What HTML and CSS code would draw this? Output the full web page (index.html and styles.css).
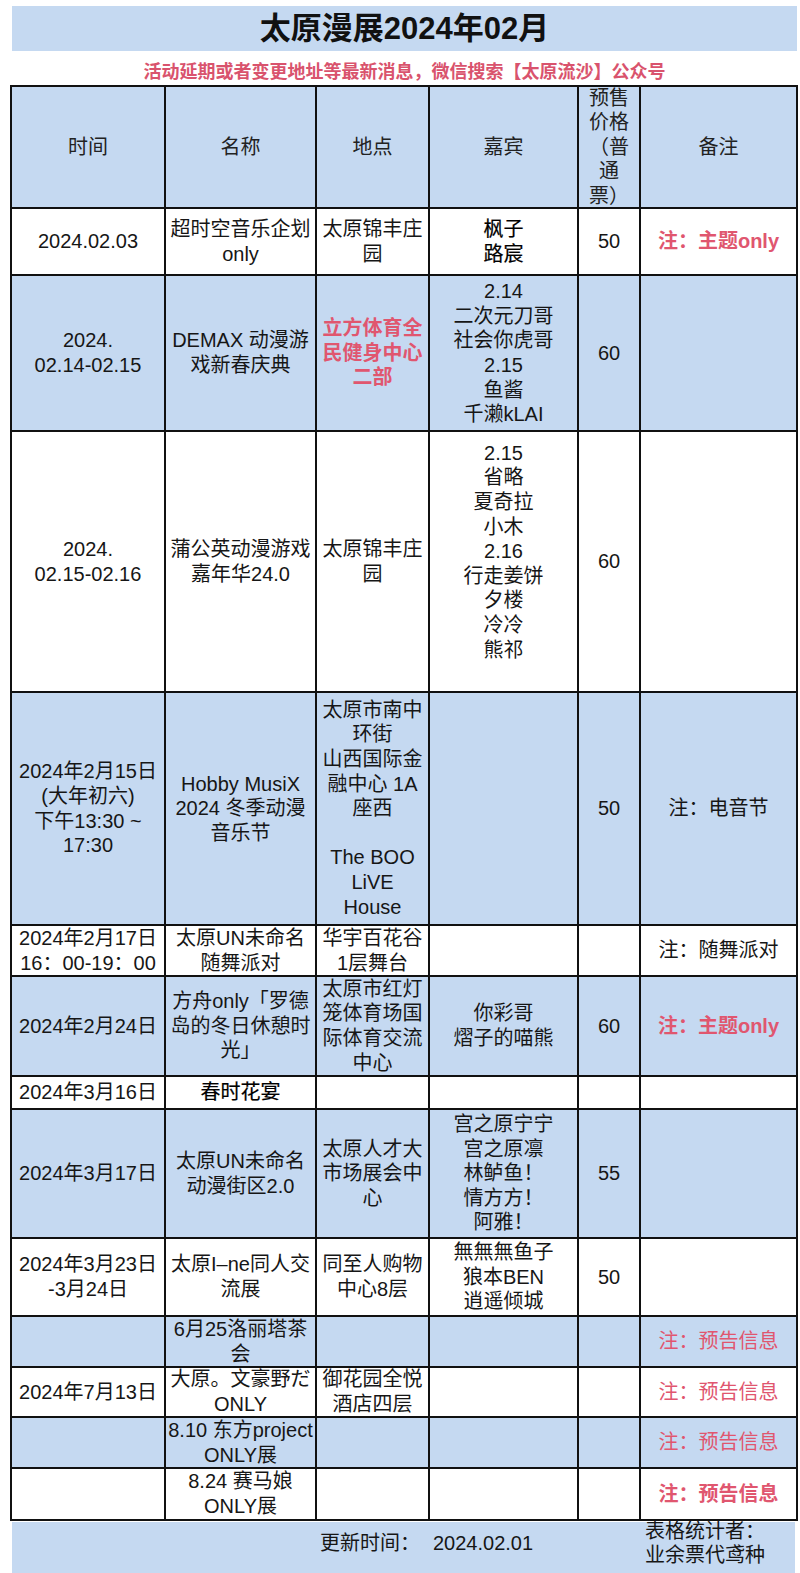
FILE: index.html
```html
<!DOCTYPE html>
<html lang="zh">
<head>
<meta charset="utf-8">
<title>太原漫展2024年02月</title>
<link rel="stylesheet" href="styles.css">
</head>
<body>
<div class="page">
  <div class="title-bar"><h1 class="title">太原漫展2024年02月</h1></div>
  <p class="notice">活动延期或者变更地址等最新消息，微信搜索【太原流沙】公众号</p>

  <div class="sheet">
    <div class="row blue head">
      <div class="c">时间</div>
      <div class="c">名称</div>
      <div class="c">地点</div>
      <div class="c">嘉宾</div>
      <div class="c">预售<br>价格<br>（普<br>通<br>票）</div>
      <div class="c">备注</div>
    </div>

    <div class="row">
      <div class="c">2024.02.03</div>
      <div class="c">超时空音乐企划<br>only</div>
      <div class="c">太原锦丰庄<br>园</div>
      <div class="c med">枫子<br>路宸</div>
      <div class="c">50</div>
      <div class="c red bold">注：主题only</div>
    </div>

    <div class="row blue">
      <div class="c">2024.<br>02.14-02.15</div>
      <div class="c">DEMAX 动漫游<br>戏新春庆典</div>
      <div class="c red bold">立方体育全<br>民健身中心<br>二部</div>
      <div class="c">2.14<br>二次元刀哥<br>社会你虎哥<br>2.15<br>鱼酱<br>千濑kLAI</div>
      <div class="c">60</div>
      <div class="c"></div>
    </div>

    <div class="row">
      <div class="c">2024.<br>02.15-02.16</div>
      <div class="c">蒲公英动漫游戏<br>嘉年华24.0</div>
      <div class="c">太原锦丰庄<br>园</div>
      <div class="c lift">2.15<br>省略<br>夏奇拉<br>小木<br>2.16<br>行走姜饼<br>夕楼<br>冷冷<br>熊祁</div>
      <div class="c">60</div>
      <div class="c"></div>
    </div>

    <div class="row blue">
      <div class="c">2024年2月15日<br>(大年初六)<br>下午13:30 ~<br>17:30</div>
      <div class="c">Hobby MusiX<br>2024 冬季动漫<br>音乐节</div>
      <div class="c">太原市南中<br>环街<br>山西国际金<br>融中心 1A<br>座西<br><br>The BOO<br>LiVE<br>House</div>
      <div class="c"></div>
      <div class="c">50</div>
      <div class="c">注：电音节</div>
    </div>

    <div class="row">
      <div class="c">2024年2月17日<br>16：00-19：00</div>
      <div class="c">太原UN未命名<br>随舞派对</div>
      <div class="c">华宇百花谷<br>1层舞台</div>
      <div class="c"></div>
      <div class="c"></div>
      <div class="c">注：随舞派对</div>
    </div>

    <div class="row blue">
      <div class="c">2024年2月24日</div>
      <div class="c">方舟only「罗德<br>岛的冬日休憩时<br>光」</div>
      <div class="c">太原市红灯<br>笼体育场国<br>际体育交流<br>中心</div>
      <div class="c">你彩哥<br>熠子的喵熊</div>
      <div class="c">60</div>
      <div class="c red bold">注：主题only</div>
    </div>

    <div class="row">
      <div class="c">2024年3月16日</div>
      <div class="c med">春时花宴</div>
      <div class="c"></div>
      <div class="c"></div>
      <div class="c"></div>
      <div class="c"></div>
    </div>

    <div class="row blue">
      <div class="c">2024年3月17日</div>
      <div class="c">太原UN未命名<br>动漫街区2.0</div>
      <div class="c">太原人才大<br>市场展会中<br>心</div>
      <div class="c">宫之原宁宁<br>宫之原凛<br>林鲈鱼！<br>情方方！<br>阿雅！</div>
      <div class="c">55</div>
      <div class="c"></div>
    </div>

    <div class="row">
      <div class="c">2024年3月23日<br>-3月24日</div>
      <div class="c">太原I–ne同人交<br>流展</div>
      <div class="c">同至人购物<br>中心8层</div>
      <div class="c">無無無鱼子<br>狼本BEN<br>逍遥倾城</div>
      <div class="c">50</div>
      <div class="c"></div>
    </div>

    <div class="row blue">
      <div class="c"></div>
      <div class="c">6月25洛丽塔茶<br>会</div>
      <div class="c"></div>
      <div class="c"></div>
      <div class="c"></div>
      <div class="c red">注：预告信息</div>
    </div>

    <div class="row">
      <div class="c">2024年7月13日</div>
      <div class="c">大原。文豪野だ<br>ONLY</div>
      <div class="c">御花园全悦<br>酒店四层</div>
      <div class="c"></div>
      <div class="c"></div>
      <div class="c red">注：预告信息</div>
    </div>

    <div class="row blue">
      <div class="c"></div>
      <div class="c">8.10 东方project<br>ONLY展</div>
      <div class="c"></div>
      <div class="c"></div>
      <div class="c"></div>
      <div class="c red">注：预告信息</div>
    </div>

    <div class="row">
      <div class="c"></div>
      <div class="c">8.24 赛马娘<br>ONLY展</div>
      <div class="c"></div>
      <div class="c"></div>
      <div class="c"></div>
      <div class="c red bold">注：预告信息</div>
    </div>
  </div>

  <div class="footer">
    <div class="updated"><span class="label">更新时间：</span><span class="date">2024.02.01</span></div>
    <div class="author">表格统计者：<br>业余票代鸢种</div>
  </div>
</div>
</body>
</html>
```

FILE: styles.css
```css
html, body {
  margin: 0;
  padding: 0;
  background: #ffffff;
}

body {
  font-family: "Liberation Sans", "Noto Sans CJK SC", sans-serif;
  color: #161616;
}

.page {
  width: 800px;
  height: 1573px;
  overflow: hidden;
}

.title-bar {
  margin: 6px 0 0 12px;
  width: 785px;
  height: 45px;
  background: #c5d9f1;
  display: flex;
  align-items: center;
  justify-content: center;
}

.title {
  margin: 0;
  font-size: 31px;
  font-weight: 700;
  line-height: 45px;
  color: #111111;
}

.notice {
  margin: 0 0 0 12px;
  width: 785px;
  height: 34px;
  box-sizing: border-box;
  padding-top: 9px;
  text-align: center;
  font-size: 18px;
  line-height: 24px;
  font-weight: 700;
  color: #d9536d;
}

.sheet {
  margin-left: 10px;
  width: 788px;
  box-sizing: border-box;
  border-top: 2px solid #111;
  border-left: 2px solid #111;
  display: grid;
  grid-template-columns: 154px 151px 113px 149px 62px 157px;
  grid-template-rows: 122px 67px 156px 261px 233px 51px 100px 33px 129px 78px 51px 50px 51px 52px;
}

.row {
  display: contents;
}

.c {
  box-sizing: border-box;
  border-right: 2px solid #111;
  border-bottom: 2px solid #111;
  background: #ffffff;
  display: flex;
  align-items: center;
  justify-content: center;
  text-align: center;
  font-size: 20px;
  line-height: 24.6px;
  white-space: nowrap;
  overflow: visible;
  padding: 0;
}

.row.blue > .c {
  background: #c5d9f1;
}

.head .c {
  color: #222;
}

.red {
  color: #e0566f;
}

.bold {
  font-weight: 700;
}

.med {
  font-weight: 400;
  color: #000;
  -webkit-text-stroke: 0.2px #000;
}

.lift {
  padding-bottom: 20px;
}

.footer {
  margin: 1px 0 0 12px;
  width: 783px;
  height: 60px;
  background: #c5d9f1;
  display: flex;
  align-items: flex-start;
  font-size: 20px;
  line-height: 24px;
}

.updated {
  margin: 9px 0 0 308px;
  white-space: nowrap;
}

.updated .label {
  margin-right: 13px;
}

.author {
  margin: -3px 0 0 auto;
  width: 150px;
  white-space: nowrap;
}
```
